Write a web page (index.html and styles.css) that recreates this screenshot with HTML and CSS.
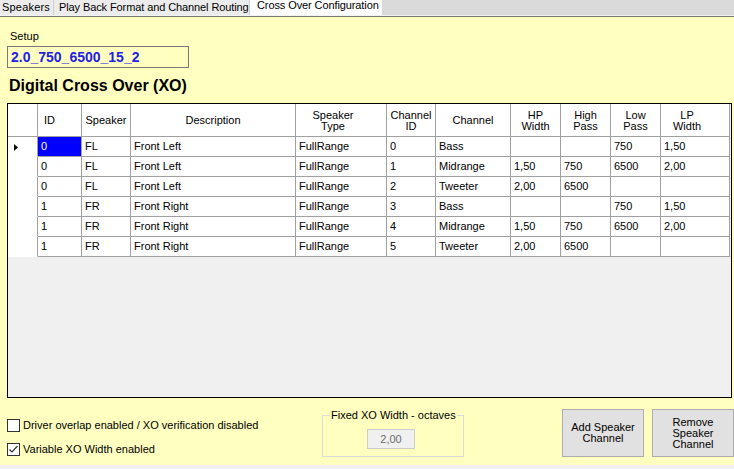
FILE: index.html
```html
<!DOCTYPE html>
<html>
<head>
<meta charset="utf-8">
<link rel="stylesheet" href="styles.css">
</head>
<body>
<div class="tabs">
  <div class="tab tab-speakers">Speakers</div>
  <div class="tab tab-playback">Play Back Format and Channel Routing</div>
  <div class="tab tab-active">Cross Over Configuration</div>
</div>
<div class="panel">
  <div class="setup-label">Setup</div>
  <div class="setup-box">2.0_750_6500_15_2</div>
  <h1 class="title">Digital Cross Over (XO)</h1>
  <div class="grid">
    <div class="row head">
      <div class="c rh"></div>
      <div class="c h sortable-id">ID</div>
      <div class="c h">Speaker</div>
      <div class="c h">Description</div>
      <div class="c h sortable">Speaker<br>Type</div>
      <div class="c h">Channel<br>ID</div>
      <div class="c h">Channel</div>
      <div class="c h">HP<br>Width</div>
      <div class="c h">High<br>Pass</div>
      <div class="c h">Low<br>Pass</div>
      <div class="c h sortable">LP<br>Width</div>
    </div>
    <div class="row">
      <div class="c rh"><svg class="arrow" width="4" height="7" viewBox="0 0 4 7"><polygon points="0,0 4,3.5 0,7" fill="#000"/></svg></div>
      <div class="c sel">0</div><div class="c">FL</div><div class="c">Front Left</div><div class="c">FullRange</div>
      <div class="c">0</div><div class="c">Bass</div><div class="c"></div><div class="c"></div><div class="c">750</div><div class="c">1,50</div>
    </div>
    <div class="row">
      <div class="c rh"></div>
      <div class="c">0</div><div class="c">FL</div><div class="c">Front Left</div><div class="c">FullRange</div>
      <div class="c">1</div><div class="c">Midrange</div><div class="c">1,50</div><div class="c">750</div><div class="c">6500</div><div class="c">2,00</div>
    </div>
    <div class="row">
      <div class="c rh"></div>
      <div class="c">0</div><div class="c">FL</div><div class="c">Front Left</div><div class="c">FullRange</div>
      <div class="c">2</div><div class="c">Tweeter</div><div class="c">2,00</div><div class="c">6500</div><div class="c"></div><div class="c"></div>
    </div>
    <div class="row">
      <div class="c rh"></div>
      <div class="c">1</div><div class="c">FR</div><div class="c">Front Right</div><div class="c">FullRange</div>
      <div class="c">3</div><div class="c">Bass</div><div class="c"></div><div class="c"></div><div class="c">750</div><div class="c">1,50</div>
    </div>
    <div class="row">
      <div class="c rh"></div>
      <div class="c">1</div><div class="c">FR</div><div class="c">Front Right</div><div class="c">FullRange</div>
      <div class="c">4</div><div class="c">Midrange</div><div class="c">1,50</div><div class="c">750</div><div class="c">6500</div><div class="c">2,00</div>
    </div>
    <div class="row">
      <div class="c rh"></div>
      <div class="c">1</div><div class="c">FR</div><div class="c">Front Right</div><div class="c">FullRange</div>
      <div class="c">5</div><div class="c">Tweeter</div><div class="c">2,00</div><div class="c">6500</div><div class="c"></div><div class="c"></div>
    </div>
  </div>
  <div class="bottom">
    <div class="checks">
      <div class="check">
        <span class="box"></span>
        <span class="check-label">Driver overlap enabled / XO verification disabled</span>
      </div>
      <div class="check check-2">
        <span class="box"><svg width="11" height="11" viewBox="0 0 11 11"><polyline points="1.5,5.5 4,8 9.5,2" fill="none" stroke="#333" stroke-width="1.2"/></svg></span>
        <span class="check-label">Variable XO Width enabled</span>
      </div>
    </div>
    <fieldset class="group">
      <legend class="group-title">Fixed XO Width - octaves</legend>
      <div class="disabled-box">2,00</div>
    </fieldset>
    <div class="buttons">
      <button class="btn">Add Speaker<br>Channel</button>
      <button class="btn">Remove<br>Speaker<br>Channel</button>
    </div>
  </div>
</div>
</body>
</html>
```
FILE: styles.css
```css
* { box-sizing: border-box; }
html, body {
  margin: 0;
  padding: 0;
}
body {
  width: 734px;
  height: 469px;
  overflow: hidden;
  background: #f0f0f0;
  font-family: "Liberation Sans", Arial, sans-serif;
  font-size: 11px;
  color: #000;
}

/* tab strip */
.tabs {
  display: flex;
  height: 16px;
  background: #dadada;
  border-bottom: 1px solid #f2f2f2;
}
.tab {
  flex: none;
  height: 15px;
  font-size: 11px;
  letter-spacing: -0.1px;
  line-height: 14px;
  background: #ececec;
  border-right: 1px solid #cfcfcf;
  white-space: nowrap;
  overflow: hidden;
}
.tab-speakers { width: 54px; padding-left: 2px; letter-spacing: 0.2px; }
.tab-playback { width: 196px; padding-left: 5px; }
.tab-active {
  width: 133px;
  padding-left: 7px;
  background: #fff;
  line-height: 11px;
  border-right: 1px solid #d8d8d8;
}

/* panel */
.panel {
  height: 449px;
  background: #ffffc0;
  border-top: 1px solid #7b7b74;
  padding: 13px 0 0 7px;
}
.setup-label {
  line-height: 13px;
  padding-left: 3px;
}
.setup-box {
  margin-top: 3px;
  width: 182px;
  height: 22px;
  border: 1px solid #7a7a7a;
  padding: 1px 0 0 3px;
  font-size: 14px;
  font-weight: bold;
  line-height: 19px;
  color: #2222e6;
}
.title {
  margin: 9px 0 0 0;
  padding-left: 2px;
  font-size: 16px;
  line-height: 18px;
  font-weight: bold;
}

/* data grid */
.grid {
  margin-top: 8px;
  width: 725px;
  height: 295px;
  border: 1px solid #000;
  background: #f0f0f0;
}
.row {
  display: grid;
  grid-template-columns: 30px 44px 49px 165px 91px 49px 75px 50px 50px 50px 69px;
  height: 20px;
}
.row.head { height: 33px; }
.c {
  background: #fff;
  border-right: 1px solid #a0a0a0;
  border-bottom: 1px solid #a0a0a0;
  padding-left: 3px;
  line-height: 19px;
  white-space: nowrap;
  overflow: hidden;
}
.rh {
  border-bottom-color: #fff;
  padding-left: 6px;
  display: flex;
  align-items: center;
}
.head .rh { border-bottom-color: #a0a0a0; }
.h {
  display: flex;
  align-items: center;
  justify-content: center;
  text-align: center;
  line-height: 11.5px;
  padding: 2px 0 0 0;
}
.h.sortable { padding-right: 16px; }
.h.sortable-id { padding-right: 20px; }
.sel {
  background: #0000ff;
  color: #fff;
}
.arrow { display: block; margin-top: 1px; }

/* bottom section */
.bottom {
  display: flex;
  height: 48px;
  margin-top: 11px;
}
.checks {
  flex: none;
  width: 315px;
  padding-top: 10px;
}
.check {
  display: flex;
  align-items: center;
  gap: 3px;
  height: 13px;
  line-height: 13px;
  white-space: nowrap;
}
.check-2 { margin-top: 11px; }
.box {
  flex: none;
  width: 13px;
  height: 13px;
  border: 1px solid #333;
  background: #fff;
  display: flex;
  align-items: center;
  justify-content: center;
}
.box svg { display: block; }

.group {
  flex: none;
  margin: 0;
  width: 142px;
  height: 48px;
  padding: 0 0 0 7px;
  border: 1px solid #dadada;
  min-width: 0;
}
.group-title {
  padding: 0 1px;
  line-height: 13px;
  font-size: 11px;
}
.disabled-box {
  margin: 7px 0 0 37px;
  width: 48px;
  height: 20px;
  border: 1px solid #cccccc;
  background: #f0f0f0;
  color: #6d6d6d;
  text-align: center;
  line-height: 18px;
}

.buttons {
  margin-left: auto;
  display: flex;
  gap: 8px;
}
.btn {
  width: 82px;
  height: 48px;
  padding: 0;
  margin: 0;
  border: 1px solid #adadad;
  background: #e1e1e1;
  font-family: "Liberation Sans", Arial, sans-serif;
  font-size: 11px;
  line-height: 11px;
  color: #000;
  text-align: center;
}
```
